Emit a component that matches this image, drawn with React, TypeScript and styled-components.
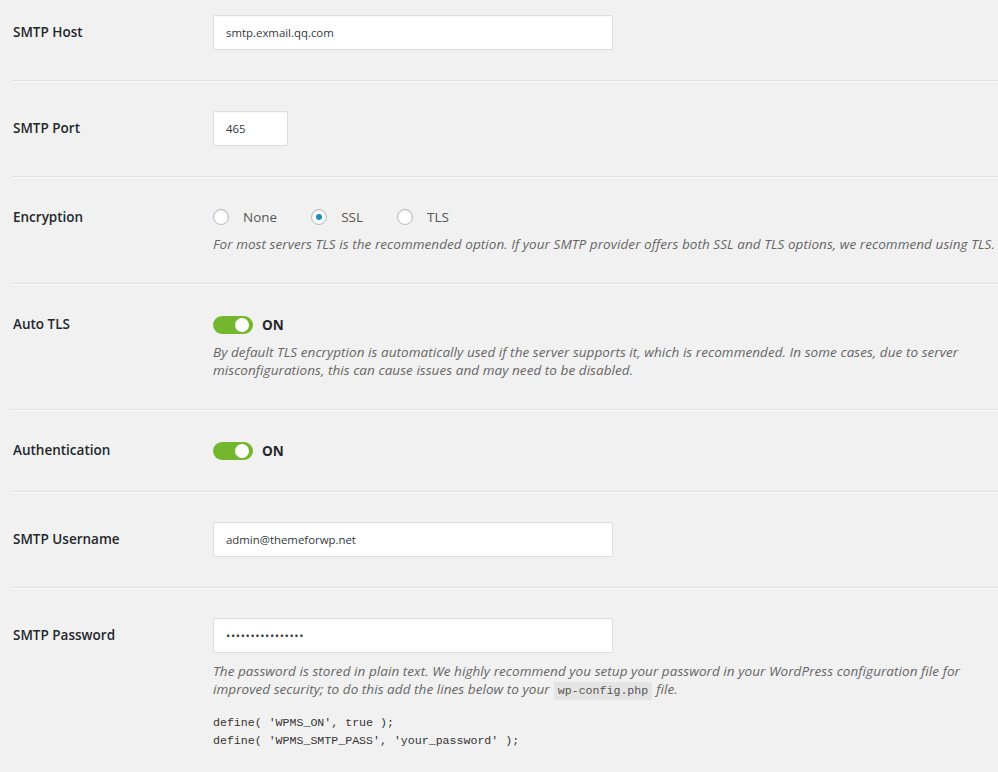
import React from "react";
import styled, { createGlobalStyle } from "styled-components";

const GlobalStyle = createGlobalStyle`
  html, body {
    margin: 0;
    padding: 0;
    background: #f1f1f1;
  }
  body {
    font-family: "Open Sans", "Noto Sans", sans-serif;
    color: #444;
    overflow: hidden;
  }
`;

const Page = styled.div`
  padding-left: 12px;
  width: 986px;
`;

const Row = styled.div<{ $top?: number }>`
  display: flex;
  align-items: flex-start;
  padding: ${(p) => p.$top ?? 30}px 0 30px;
  border-bottom: 1px solid #e1e1e1;
  box-shadow: 0 1px 0 #f9f9f9;
`;

const Label = styled.div<{ $lh: number }>`
  flex: 0 0 201px;
  padding-left: 1px;
  box-sizing: border-box;
  font-size: 13.5px;
  font-weight: 600;
  color: #23282d;
  line-height: ${(p) => p.$lh}px;
`;

const Field = styled.div`
  flex: 1;
  min-width: 0;
`;

const TextInput = styled.input<{ $w: number }>`
  display: block;
  box-sizing: border-box;
  width: ${(p) => p.$w}px;
  height: 35px;
  margin: 0;
  padding: 0 12px;
  border: 1px solid #dedede;
  border-radius: 2px;
  background: #fff;
  box-shadow: inset 0 1px 2px rgba(0, 0, 0, 0.04);
  font-family: "Open Sans", "Noto Sans", sans-serif;
  font-size: 11.4px;
  color: #32373c;
  outline: none;

  &[type="password"] {
    letter-spacing: 0.6px;
  }
`;

const Description = styled.p<{ $gap: number }>`
  margin: ${(p) => p.$gap}px 0 0;
  font-size: 13.5px;
  font-style: italic;
  line-height: 18px;
  color: #666;
  white-space: nowrap;
  letter-spacing: 0.06px;
`;

const InlineCode = styled.code`
  display: inline-block;
  margin: 0 4px;
  padding: 0 4px;
  background: #e4e4e4;
  font-family: "Liberation Mono", monospace;
  font-style: normal;
  font-size: 11.6px;
  line-height: 18px;
  letter-spacing: 0;
  color: #555;
`;

const CodeBlock = styled.pre`
  margin: 14px 0 0;
  font-family: "Liberation Mono", monospace;
  font-size: 11.6px;
  line-height: 18px;
  color: #333;
`;

const RadioGroup = styled.div`
  display: flex;
  align-items: center;
  height: 20px;
  gap: 34px;
`;

const RadioOption = styled.label`
  display: flex;
  align-items: center;
  gap: 14px;
  font-size: 13.5px;
  color: #555;
`;

const RadioCircle = styled.span<{ $checked?: boolean }>`
  position: relative;
  display: inline-block;
  width: 16px;
  height: 16px;
  box-sizing: border-box;
  border-radius: 50%;
  border: 1px solid #b4b9be;
  background: #fff;
  box-shadow: inset 0 1px 2px rgba(0, 0, 0, 0.1);

  &::after {
    content: "";
    display: ${(p) => (p.$checked ? "block" : "none")};
    position: absolute;
    left: 4px;
    top: 4px;
    width: 6px;
    height: 6px;
    border-radius: 50%;
    background: #1e8cbe;
  }
`;

const ToggleLine = styled.div`
  display: flex;
  align-items: center;
  gap: 9px;
  height: 21px;
`;

const Switch = styled.span`
  position: relative;
  display: inline-block;
  width: 40px;
  height: 18px;
  border-radius: 9px;
  background: #74b72f;

  &::after {
    content: "";
    position: absolute;
    right: 4px;
    top: 2px;
    width: 14px;
    height: 14px;
    border-radius: 50%;
    background: #fff;
  }
`;

const SwitchText = styled.span`
  font-size: 13.5px;
  font-weight: 700;
  color: #23282d;
`;

type ToggleProps = { on: boolean };

function Toggle({ on }: ToggleProps) {
  return (
    <ToggleLine>
      <Switch />
      <SwitchText>{on ? "ON" : "OFF"}</SwitchText>
    </ToggleLine>
  );
}

const encryptionOptions = [
  { value: "none", label: "None" },
  { value: "ssl", label: "SSL" },
  { value: "tls", label: "TLS" },
];

export default function App() {
  const encryption = "ssl";

  return (
    <>
      <GlobalStyle />
      <Page>
        <Row $top={15}>
          <Label $lh={35}>SMTP Host</Label>
          <Field>
            <TextInput $w={400} defaultValue="smtp.exmail.qq.com" />
          </Field>
        </Row>

        <Row>
          <Label $lh={35}>SMTP Port</Label>
          <Field>
            <TextInput $w={75} defaultValue="465" />
          </Field>
        </Row>

        <Row>
          <Label $lh={20}>Encryption</Label>
          <Field>
            <RadioGroup>
              {encryptionOptions.map((opt) => (
                <RadioOption key={opt.value}>
                  <RadioCircle $checked={opt.value === encryption} />
                  {opt.label}
                </RadioOption>
              ))}
            </RadioGroup>
            <Description $gap={8}>
              For most servers TLS is the recommended option. If your SMTP
              provider offers both SSL and TLS options, we recommend using TLS.
            </Description>
          </Field>
        </Row>

        <Row>
          <Label $lh={21}>Auto TLS</Label>
          <Field>
            <Toggle on />
            <Description $gap={8}>
              By default TLS encryption is automatically used if the server
              supports it, which is recommended. In some cases, due to server
              <br />
              misconfigurations, this can cause issues and may need to be
              disabled.
            </Description>
          </Field>
        </Row>

        <Row>
          <Label $lh={21}>Authentication</Label>
          <Field>
            <Toggle on />
          </Field>
        </Row>

        <Row>
          <Label $lh={35}>SMTP Username</Label>
          <Field>
            <TextInput $w={400} defaultValue="admin@themeforwp.net" />
          </Field>
        </Row>

        <Row>
          <Label $lh={35}>SMTP Password</Label>
          <Field>
            <TextInput $w={400} type="password" defaultValue="themeforwp.12345" />
            <Description $gap={9}>
              The password is stored in plain text. We highly recommend you
              setup your password in your WordPress configuration file for
              <br />
              improved security; to do this add the lines below to your
              <InlineCode>wp-config.php</InlineCode>file.
            </Description>
            <CodeBlock>
              {"define( 'WPMS_ON', true );\ndefine( 'WPMS_SMTP_PASS', 'your_password' );"}
            </CodeBlock>
          </Field>
        </Row>
      </Page>
    </>
  );
}
